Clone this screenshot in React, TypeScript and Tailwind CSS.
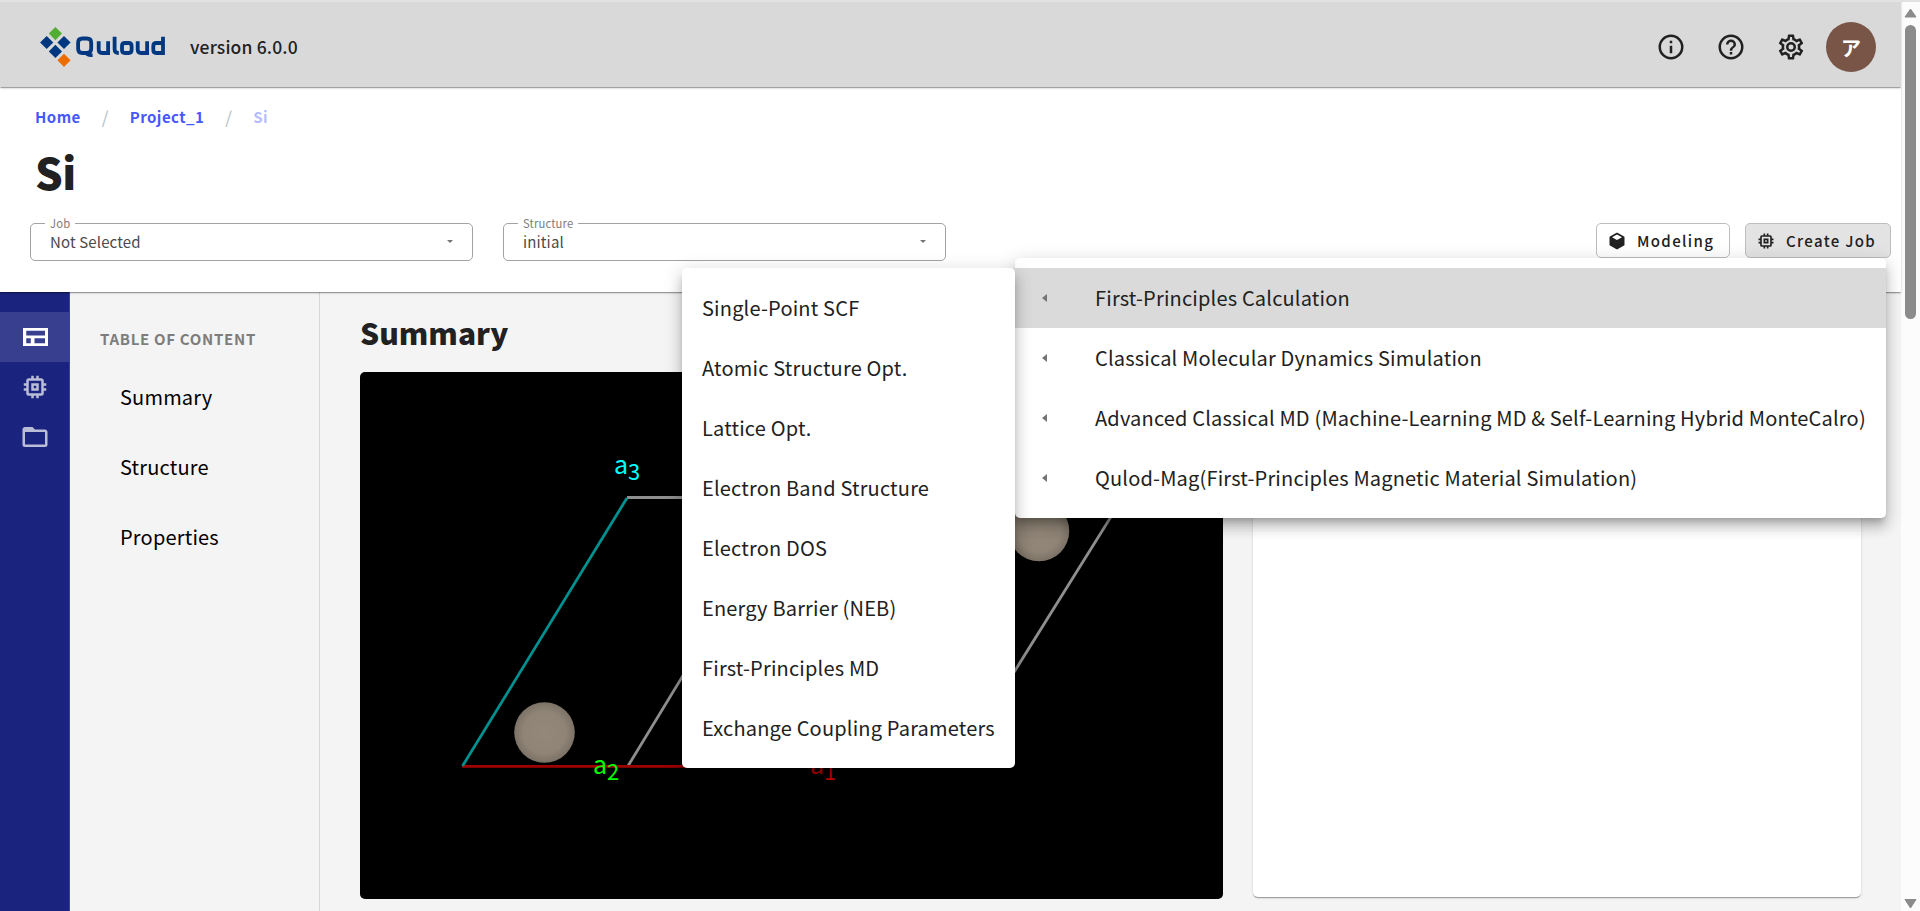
import React from "react";

const ICONS = {
  info: "M11,9H13V7H11M12,20C7.59,20 4,16.41 4,12C4,7.59 7.59,4 12,4C16.41,4 20,7.59 20,12C20,16.41 16.41,20 12,20M12,2A10,10 0 0,0 2,12A10,10 0 0,0 12,22A10,10 0 0,0 22,12A10,10 0 0,0 12,2M11,17H13V11H11V17Z",
  help: "M11,18H13V16H11V18M12,2A10,10 0 0,0 2,12A10,10 0 0,0 12,22A10,10 0 0,0 22,12A10,10 0 0,0 12,2M12,20C7.59,20 4,16.41 4,12C4,7.59 7.59,4 12,4C16.41,4 20,7.59 20,12C20,16.41 16.41,20 12,20M12,6A4,4 0 0,0 8,10H10A2,2 0 0,1 12,8A2,2 0 0,1 14,10C14,12 11,11.75 11,15H13C13,12.75 16,12.5 16,10A4,4 0 0,0 12,6Z",
  cog: "M12,8A4,4 0 0,1 16,12A4,4 0 0,1 12,16A4,4 0 0,1 8,12A4,4 0 0,1 12,8M12,10A2,2 0 0,0 10,12A2,2 0 0,0 12,14A2,2 0 0,0 14,12A2,2 0 0,0 12,10M10,22C9.75,22 9.54,21.82 9.5,21.58L9.13,18.93C8.5,18.68 7.96,18.34 7.44,17.94L4.95,18.95C4.73,19.03 4.46,18.95 4.34,18.73L2.34,15.27C2.21,15.05 2.27,14.78 2.46,14.63L4.57,12.97L4.5,12L4.57,11L2.46,9.37C2.27,9.22 2.21,8.95 2.34,8.73L4.34,5.27C4.46,5.05 4.73,4.96 4.95,5.05L7.44,6.05C7.96,5.66 8.5,5.32 9.13,5.07L9.5,2.42C9.54,2.18 9.75,2 10,2H14C14.25,2 14.46,2.18 14.5,2.42L14.87,5.07C15.5,5.32 16.04,5.66 16.56,6.05L19.05,5.05C19.27,4.96 19.54,5.05 19.66,5.27L21.66,8.73C21.79,8.95 21.73,9.22 21.54,9.37L19.43,11L19.5,12L19.43,13L21.54,14.63C21.73,14.78 21.79,15.05 21.66,15.27L19.66,18.73C19.54,18.95 19.27,19.04 19.05,18.95L16.56,17.95C16.04,18.34 15.5,18.68 14.87,18.93L14.5,21.58C14.46,21.82 14.25,22 14,22H10M11.25,4L10.88,6.61C9.68,6.86 8.62,7.5 7.85,8.39L5.44,7.35L4.69,8.65L6.8,10.2C6.4,11.37 6.4,12.64 6.8,13.8L4.68,15.36L5.43,16.66L7.86,15.62C8.63,16.5 9.68,17.14 10.87,17.38L11.24,20H12.76L13.13,17.39C14.32,17.14 15.37,16.5 16.14,15.62L18.57,16.66L19.32,15.36L17.2,13.81C17.6,12.64 17.6,11.37 17.2,10.2L19.31,8.65L18.56,7.35L16.15,8.39C15.38,7.5 14.32,6.86 13.12,6.62L12.75,4H11.25Z",
  chip: "M17,17H7V7H17M21,11V9H19V7C19,5.89 18.1,5 17,5H15V3H13V5H11V3H9V5H7C5.89,5 5,5.89 5,7V9H3V11H5V13H3V15H5V17A2,2 0 0,0 7,19H9V21H11V19H13V21H15V19H17A2,2 0 0,0 19,17V15H21V13H19V11M13,13H11V11H13M15,9H9V15H15V9Z",
  folder: "M20,18H4V8H20M20,6H12L10,4H4C2.89,4 2,4.89 2,6V18A2,2 0 0,0 4,20H20A2,2 0 0,0 22,18V8C22,6.89 21.1,6 20,6Z",
  table: "M2.4,4.8V19.2H22.4V4.8H2.4M20,7V10.7H5V7H20M5,16.9V13H8.6V16.9H5M11.6,16.9V13H20V16.9H11.6Z",
  cube: "M21,16.5C21,16.88 20.79,17.21 20.47,17.38L12.57,21.82C12.41,21.94 12.21,22 12,22C11.79,22 11.59,21.94 11.43,21.82L3.53,17.38C3.21,17.21 3,16.88 3,16.5V7.5C3,7.12 3.21,6.79 3.53,6.62L11.43,2.18C11.59,2.06 11.79,2 12,2C12.21,2 12.41,2.06 12.57,2.18L20.47,6.62C20.79,6.79 21,7.12 21,7.5V16.5M12,4.15L6.04,7.5L12,10.85L17.96,7.5L12,4.15Z",
};

function Icon({ d, className }: { d: string; className: string }) {
  return (
    <svg viewBox="0 0 24 24" className={className} fill="currentColor" fillRule="evenodd">
      <path d={d} />
    </svg>
  );
}

function Logo() {
  return (
    <svg width="128" height="42" viewBox="40 26 128 42" className="block">
      <path d="M55.4 27L62 33.6L55.4 40.2L48.8 33.6Z" fill="#52ae32" />
      <path d="M46.7 35.9L53.3 42.5L46.7 49.1L40.1 42.5Z" fill="#003781" />
      <path d="M64 35.9L70.6 42.5L64 49.1L57.4 42.5Z" fill="#003781" />
      <path d="M55.4 44.8L62 51.4L55.4 58L48.8 51.4Z" fill="#003781" />
      <path d="M64 53.7L70.6 60.3L64 66.9L57.4 60.3Z" fill="#ed6c00" />
      <g fill="none" stroke="#003781" strokeWidth="3.8">
        <path d="M82.4 38.5H86.9Q91.2 38.5 91.2 42.8V48.7Q91.2 53 86.9 53H82.4Q78.1 53 78.1 48.7V42.8Q78.1 38.5 82.4 38.5Z" />
        <path d="M86 52.5Q86.2 55.5 92.6 55.3" strokeWidth="3.4" />
        <path d="M98.7 41.2V49.6Q98.7 53 102.1 53H108.1V41.2" />
        <path d="M114.6 36.8V49.6Q114.6 53 118.8 53" />
        <path d="M125 43H128.6Q131.6 43 131.6 46V50Q131.6 53 128.6 53H125Q122 53 122 50V46Q122 43 125 43Z" />
        <path d="M137.7 41.2V49.6Q137.7 53 141.1 53H147.1V41.2" />
        <path d="M163 36.8V53H156.4Q153.3 53 153.3 50V46Q153.3 43 156.4 43H163" />
      </g>
    </svg>
  );
}

function Select({ label, value }: { label: string; value: string }) {
  return (
    <fieldset className="flex h-[42px] w-[443px] items-start rounded-[5px] border border-[#a3a3a3] px-[14px]">
      <legend className="h-[8px] px-[5px] text-[11.25px] leading-[8px] tracking-[0.15px] text-[#7d7d7d]">{label}</legend>
      <div className="flex h-[29px] w-full items-center justify-between pl-[5px]">
        <span className="text-[15px] leading-[24px] tracking-[0.14px] text-[#4a4a4a]">{value}</span>
        <svg width="6" height="3" viewBox="0 0 6 3" className="mr-[5px]">
          <path d="M0 0H6L3 3Z" fill="#757575" />
        </svg>
      </div>
    </fieldset>
  );
}

const JOBS = [
  "Single-Point SCF",
  "Atomic Structure Opt.",
  "Lattice Opt.",
  "Electron Band Structure",
  "Electron DOS",
  "Energy Barrier (NEB)",
  "First-Principles MD",
  "Exchange Coupling Parameters",
];

const GROUPS = [
  "First-Principles Calculation",
  "Classical Molecular Dynamics Simulation",
  "Advanced Classical MD (Machine-Learning MD & Self-Learning Hybrid MonteCalro)",
  "Qulod-Mag(First-Principles Magnetic Material Simulation)",
];

const ELEVATION = "shadow-[0_2px_1px_-1px_rgba(0,0,0,0.2),0_1px_1px_rgba(0,0,0,0.14),0_1px_3px_rgba(0,0,0,0.12)]";
const MENU_SHADOW = "shadow-[0_6px_6px_-3px_rgba(0,0,0,0.2),0_10px_12px_1px_rgba(0,0,0,0.14),0_4px_17px_3px_rgba(0,0,0,0.12)]";

function Viewer() {
  return (
    <svg width="863" height="527" viewBox="360 372 863 527" className="block rounded-[5px] bg-black">
      <defs>
        <radialGradient id="atom">
          <stop offset="0" stopColor="#94887a" />
          <stop offset="0.7" stopColor="#8f8476" />
          <stop offset="1" stopColor="#7b7165" />
        </radialGradient>
      </defs>
      <g fill="none" strokeWidth="2.8">
        <path d="M627 497.5H1123L955.5 766" stroke="#8e8e8e" />
        <path d="M628 766L791 498" stroke="#8e8e8e" />
        <path d="M462 766.3H956" stroke="#a00000" />
        <path d="M462.5 766L627 498" stroke="#009090" />
      </g>
      <circle cx="544.5" cy="732.5" r="30.3" fill="url(#atom)" />
      <circle cx="1039" cy="531" r="30.3" fill="url(#atom)" />
      <g fontSize="25">
        <text x="614" y="474" fill="#00ffff">a<tspan dy="6" fontSize="22">3</tspan></text>
        <text x="593" y="774" fill="#00ff00">a<tspan dy="6" fontSize="22">2</tspan></text>
        <text x="810" y="774" fill="#c80000">a<tspan dy="6" fontSize="22">1</tspan></text>
      </g>
    </svg>
  );
}

export default function App() {
  return (
    <div className="relative flex h-[911px] w-[1920px] overflow-hidden bg-[#f4f4f4] font-['Noto_Sans_CJK_JP',sans-serif] text-[#212121]">
      <div className="flex w-[1901px] flex-col">
        <header className={`relative z-20 flex h-[87px] shrink-0 items-center border-t-2 border-[#e2e2e2] bg-[#d9d9d9] pl-[40px] ${ELEVATION}`}>
          <div className="self-start pt-[24px]"><Logo /></div>
          <span className="ml-[22px] pt-[4px] text-[17.5px] leading-[28px] font-medium tracking-[0.15px]">version 6.0.0</span>
          <div className="ml-auto flex items-center gap-[30px] pt-[5px] pr-[25px]">
            <Icon d={ICONS.info} className="size-[30px]" />
            <Icon d={ICONS.help} className="size-[30px]" />
            <Icon d={ICONS.cog} className="size-[30px]" />
            <div className="-ml-[10px] flex size-[50px] items-center justify-center rounded-full bg-[#795548] pt-[2px] text-[20px] font-bold text-white">ア</div>
          </div>
        </header>

        <section className={`relative z-10 flex h-[205px] shrink-0 flex-col bg-white ${ELEVATION}`}>
          <nav className="flex h-[60px] items-center pl-[35px] text-[15px] font-bold tracking-[0.45px] text-[#4458fe]">
            <span>Home</span>
            <span className="w-[49px] text-center text-[17px] font-normal text-[#b0bec5]">/</span>
            <span>Project_1</span>
            <span className="w-[49px] text-center text-[17px] font-normal text-[#b0bec5]">/</span>
            <span className="text-[#b6bdff]">Si</span>
          </nav>
          <h1 className="h-[70px] pl-[35px] text-[43.5px] leading-[49px] font-black tracking-[-0.5px]">Si</h1>
          <div className="flex pr-[10px] pl-[30px]">
            <div className="flex gap-[30px] pt-[2px]">
              <Select label="Job" value="Not Selected" />
              <Select label="Structure" value="initial" />
            </div>
            <div className="ml-auto flex gap-[15px] pt-[6px] text-[15px] leading-[34px] font-medium tracking-[1.34px]">
              <button className="flex h-[35px] w-[134px] items-center rounded-[5px] border border-[#bdbdbd] pl-[10px]">
                <Icon d={ICONS.cube} className="mr-[10px] size-[20px]" />
                Modeling
              </button>
              <button className="flex h-[35px] w-[146px] items-center rounded-[5px] border border-[#bdbdbd] bg-[#e3e3e3] pl-[10px]">
                <Icon d={ICONS.chip} className="mr-[10px] size-[20px]" />
                Create Job
              </button>
            </div>
          </div>
        </section>

        <div className="flex min-h-0 flex-1">
          <aside className="flex w-[70px] shrink-0 flex-col border-r border-[#3b4390] bg-[#1a237e] pt-[20px] text-[#babdd8]">
            <div className="flex h-[50px] items-center justify-center bg-[#373f8e] text-white"><Icon d={ICONS.table} className="size-[30px]" /></div>
            <div className="flex h-[50px] items-center justify-center"><Icon d={ICONS.chip} className="size-[30px]" /></div>
            <div className="flex h-[50px] items-center justify-center"><Icon d={ICONS.folder} className="size-[30px]" /></div>
          </aside>
          <div className="w-[250px] shrink-0 border-r border-[#d6d6d6] pt-[20px] text-black">
            <div className="h-[50px] pl-[30px] text-[15px] leading-[54px] font-bold tracking-[0.7px] text-[#7d7d7d]">TABLE OF CONTENT</div>
            {["Summary", "Structure", "Properties"].map((t) => (
              <div key={t} className="h-[70px] pl-[50px] text-[20px] leading-[70px] tracking-[0.1875px]">{t}</div>
            ))}
          </div>
          <main className="flex-1 pl-[40px]">
            <h2 className="h-[80px] text-[30px] leading-[80px] font-black">Summary</h2>
            <div className="flex gap-[30px]">
              <Viewer />
              <div className={`h-[525px] w-[608px] rounded-[5px] bg-white ${ELEVATION}`} />
            </div>
          </main>
        </div>
      </div>

      <div className="relative flex w-[19px] flex-col items-center border-t-2 border-[#e2e2e2] bg-[#fcfcfc]">
        <svg width="19" height="909" viewBox="0 2 19 909">
          <path d="M9.5 9L15 17H4Z" fill="#8b8b8b" stroke="#8b8b8b" strokeLinejoin="round" />
          <rect x="4" y="25" width="11" height="294" rx="5.5" fill="#8b8b8b" />
          <path d="M9.5 908L15 899.5H4Z" fill="#8b8b8b" stroke="#8b8b8b" strokeLinejoin="round" />
        </svg>
      </div>

      <div className={`absolute top-[258px] left-[1015px] z-30 h-[260px] w-[871px] rounded-[5px] bg-white pt-[10px] ${MENU_SHADOW}`}>
        {GROUPS.map((t, i) => (
          <div key={t} className={`flex h-[60px] items-center pl-[27px] ${i === 0 ? "bg-[#dadada]" : ""}`}>
            <svg width="5" height="8" viewBox="0 0 5 8" className="mr-[48px]"><path d="M5 0V8L0 4Z" fill="#757575" /></svg>
            <span className="text-[20px] tracking-[0.18px] whitespace-nowrap">{t}</span>
          </div>
        ))}
      </div>
      <div className={`absolute top-[268px] left-[682px] z-40 h-[500px] w-[333px] rounded-[5px] bg-white py-[10px] ${MENU_SHADOW}`}>
        {JOBS.map((t) => (
          <div key={t} className="h-[60px] pl-[20px] text-[20px] leading-[60px] tracking-[0.18px] whitespace-nowrap">{t}</div>
        ))}
      </div>
    </div>
  );
}
